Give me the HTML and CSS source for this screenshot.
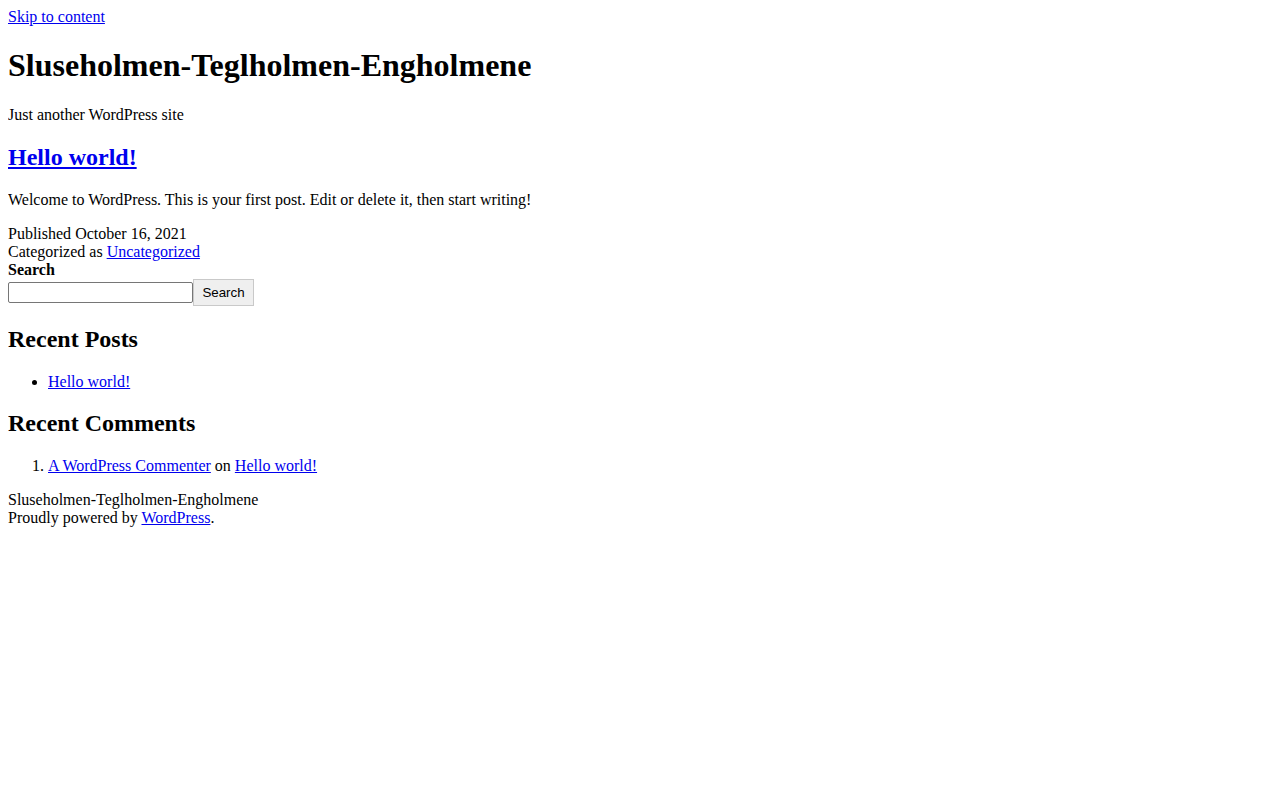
FILE: index.html
```html
<!DOCTYPE html>
<html lang="en-US">
<head>
    <meta charset="UTF-8">
    <meta name="viewport" content="width=device-width, initial-scale=1.0">
    <title>Sluseholmen-Teglholmen-Engholmene &ndash; Just another WordPress site</title>
    <link rel="stylesheet" href="styles.css">
</head>
<body>
    <div id="page" class="site">
        <a class="skip-link" href="#content">Skip to content</a>

        <header id="masthead" class="site-header">
            <div class="site-branding">
                <h1 class="site-title">Sluseholmen-Teglholmen-Engholmene</h1>
                <p class="site-description">Just another WordPress site</p>
            </div>
        </header>

        <div id="content" class="site-content">
            <main id="main" class="site-main">
                <article class="post">
                    <header class="entry-header">
                        <h2 class="entry-title"><a href="#">Hello world!</a></h2>
                    </header>
                    <div class="entry-content">
                        <p>Welcome to WordPress. This is your first post. Edit or delete it, then start writing!</p>
                    </div>
                    <footer class="entry-footer">
                        <span class="posted-on">Published <time datetime="2021-10-16">October 16, 2021</time></span>
                        <div class="cat-links">Categorized as <a href="#">Uncategorized</a></div>
                    </footer>
                </article>
            </main>

            <aside class="widget-area">
                <section class="widget widget_search">
                    <form role="search" class="search-form">
                        <label class="search-label" for="s">Search</label>
                        <div class="search-inside">
                            <input type="search" id="s" class="search-field">
                            <button type="submit" class="search-submit">Search</button>
                        </div>
                    </form>
                </section>

                <section class="widget widget_recent_entries">
                    <h2 class="widget-title">Recent Posts</h2>
                    <ul>
                        <li><a href="#">Hello world!</a></li>
                    </ul>
                </section>

                <section class="widget widget_recent_comments">
                    <h2 class="widget-title">Recent Comments</h2>
                    <ol>
                        <li><a href="#">A WordPress Commenter</a> on <a href="#">Hello world!</a></li>
                    </ol>
                </section>
            </aside>
        </div>

        <footer class="site-footer">
            <div class="site-name">Sluseholmen-Teglholmen-Engholmene</div>
            <div class="powered-by">Proudly powered by <a href="#">WordPress</a>.</div>
        </footer>
    </div>
</body>
</html>
```

FILE: styles.css
```css
body {
    font-family: "Liberation Serif", "Times New Roman", serif;
    font-size: 16px;
    color: #000;
    background-color: #fff;
    margin: 8px;
}

a {
    color: #0000ee;
}

.site-title {
    font-size: 2em;
    margin: 0.67em 0;
}

.entry-title,
.widget-title {
    font-size: 1.5em;
    margin: 0.83em 0;
}

.posted-on {
    display: inline;
}

.search-label {
    display: block;
    font-weight: bold;
}

.search-inside {
    display: flex;
    align-items: center;
}

.search-field {
    font-family: "Liberation Sans", Arial, sans-serif;
    font-size: 13.33px;
    width: 185px;
    height: 21px;
    padding: 1px 2px;
    border: 1px solid #767676;
    border-radius: 2px;
    box-sizing: border-box;
    margin: 0;
}

.search-submit {
    font-family: "Liberation Sans", Arial, sans-serif;
    font-size: 13.33px;
    width: 61px;
    height: 27px;
    padding: 1px 6px;
    color: #000;
    background-color: #efefef;
    border: 1px solid #c9c9c9;
    border-radius: 0;
    margin: 0;
}

.widget ul,
.widget ol {
    margin: 1em 0;
    padding-left: 40px;
}
```
